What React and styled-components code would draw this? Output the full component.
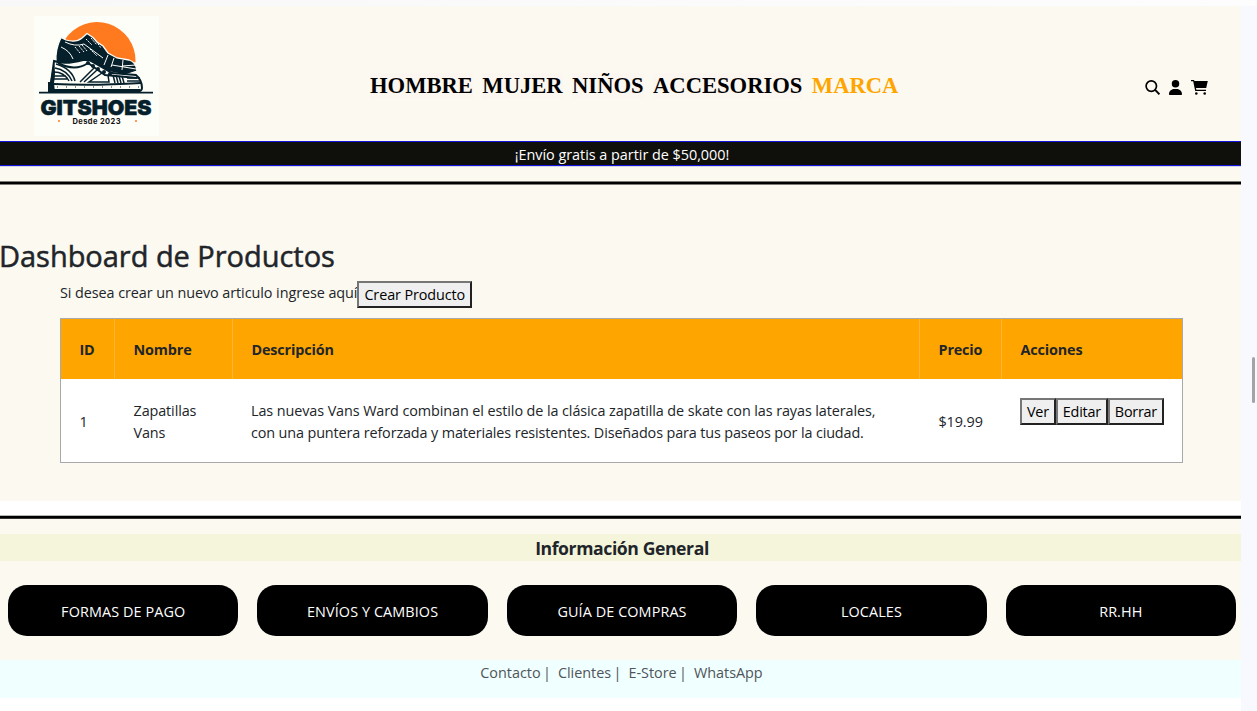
import React from "react";
import styled, { createGlobalStyle } from "styled-components";
import { FaUser } from "react-icons/fa6";

const cream = "#fcf9f1";

const GlobalStyle = createGlobalStyle`
  * { box-sizing: border-box; }
  body {
    margin: 0;
    background: #fff;
    color: #212529;
    font-family: "Open Sans", "Noto Sans", sans-serif;
    font-size: 14.4px;
    line-height: 22px;
    overflow: hidden;
  }
`;

const Window = styled.div`
  height: 711px;
  display: flex;
  flex-direction: column;
`;
const TopShade = styled.div`
  height: 6px;
  flex: none;
  background: linear-gradient(90deg, #f8f8f8, #fdfdfd);
`;
const Body = styled.div`
  flex: 1;
  display: flex;
  min-height: 0;
`;
const Page = styled.div`
  width: 1241px;
  flex: none;
  display: flex;
  flex-direction: column;
`;
const Gutter = styled.div`
  flex: 1;
  background: #f8f9fe;
  padding: 351px 2px 0 11px;
`;
const Thumb = styled.div`
  width: 3px;
  height: 46px;
  border-radius: 2px;
  background: #a3a3a5;
`;

const Header = styled.header`
  height: 135px;
  background: ${cream};
  display: flex;
  align-items: flex-start;
  padding: 10px 33px 0 34px;
`;
const Logo = styled.svg`
  width: 125px;
  height: 120px;
  flex: none;
`;
const Nav = styled.nav`
  display: flex;
  gap: 9.4px;
  margin: 57px 0 0 211px;
  font: bold 22.6px/26px "Liberation Serif", serif;
`;
const NavLink = styled.a`
  color: ${(p) => (p.$active ? "orange" : "#000")};
  background: ${(p) => (p.$active ? "none" : "#fcf6f1")};
`;
const Tools = styled.div`
  display: flex;
  gap: 8px;
  margin: 64px 0 0 auto;
  color: #000;
  svg { display: block; height: 15px; width: auto; }
`;

const Promo = styled.div`
  height: 25px;
  flex: none;
  background: #0f0f0c;
  border-top: 1px solid #1414dc;
  border-bottom: 1px solid #1414dc;
  color: #fff;
  text-align: center;
  line-height: 25px;
  padding-left: 3px;
  letter-spacing: -0.02px;
`;
const Rule = styled.div`
  height: 4px;
  flex: none;
  background: #000;
  border-top: 1px solid ${(p) => p.$top};
  border-bottom: 1px solid ${(p) => p.$bottom};
`;
const Band = styled.div`
  height: ${(p) => p.$h}px;
  flex: none;
  background: ${(p) => p.$bg || cream};
  border-top: ${(p) => (p.$edge ? `1px solid ${p.$edge}` : "none")};
`;
const Main = styled.main`
  height: 316px;
  background: ${cream};
  padding-top: 51px;
`;
const Title = styled.h2`
  margin: 0 0 0 -1px;
  font-size: 29px;
  line-height: 40px;
  font-weight: 500;
  letter-spacing: -0.03px;
  -webkit-text-stroke: 0.5px #212529;
`;
const Intro = styled.div`
  display: flex;
  margin: 5px 0 0 60px;
  height: 27px;
  letter-spacing: -0.07px;
  line-height: 23px;
`;
const Button = styled.button`
  height: 27px;
  padding: 0 5px;
  border: 2px solid;
  border-color: #767676 #222 #222 #767676;
  background: #efefef;
  color: #000;
  font: inherit;
  line-height: 23px;
  letter-spacing: ${(p) => (p.$wide ? "-0.1px" : "-0.24px")};
`;
const Table = styled.div`
  margin: 10px 0 0 60px;
  width: 1123px;
  border: 1px solid #a9a9ab;
  background: #fff;
`;
const Row = styled.div`
  display: grid;
  grid-template-columns: 54px 118px 687px 82px 1fr;
  height: ${(p) => (p.$head ? 60 : 83)}px;
  background: ${(p) => (p.$head ? "orange" : "#fff")};
  font-weight: ${(p) => (p.$head ? 700 : 400)};
  letter-spacing: ${(p) => (p.$head ? "-0.15px" : "-0.11px")};
`;
const Cell = styled.div`
  display: flex;
  align-items: ${(p) => (p.$top ? "flex-start" : "center")};
  padding: ${(p) => (p.$top ? "19px 0 0 18px" : "2px 0 0 18.5px")};
  border-right: 1px solid ${(p) => (p.$line ? "#ffb733" : "transparent")};
  white-space: pre;
`;
const Description = styled(Cell)`
  flex-direction: column;
  align-items: flex-start;
  justify-content: center;
  padding-left: 18px;
`;
const Line = styled.span`
  letter-spacing: ${(p) => p.$spacing}px;
`;

const FooterTitle = styled.h3`
  margin: 0;
  height: 27px;
  flex: none;
  background: #f5f5dc;
  font-size: 17.6px;
  font-weight: 700;
  line-height: 29px;
  text-align: center;
  padding-left: 3px;
  letter-spacing: -0.41px;
`;
const Pills = styled.div`
  height: 99px;
  flex: none;
  display: grid;
  grid-template-columns: repeat(5, 1fr);
  gap: 19px;
  padding: 24px 5px 24px 8px;
  background: ${cream};
`;
const Pill = styled.a`
  height: 51px;
  border-radius: 19px;
  background: #000;
  color: #fff;
  line-height: 53px;
  text-align: center;
  letter-spacing: 0.1px;
`;
const Contact = styled.div`
  height: 38px;
  flex: none;
  display: flex;
  justify-content: center;
  gap: 7px;
  padding: 2px 0 0 2px;
  background: #f0ffff;
  color: #4f5559;
  letter-spacing: -0.02px;
`;
const ContactItem = styled.span`
  display: flex;
  gap: 2.5px;
`;

const pills = ["FORMAS DE PAGO", "ENVÍOS Y CAMBIOS", "GUÍA DE COMPRAS", "LOCALES", "RR.HH"];
const contacts = ["Contacto", "Clientes", "E-Store", "WhatsApp"];
const heads = ["ID", "Nombre", "Descripción", "Precio", "Acciones"];

function SearchIcon() {
  return (
    <svg viewBox="0 0 15 15" fill="none" stroke="currentColor">
      <circle cx="6.300" cy="6.100" r="5.200" strokeWidth="1.700" />
      <path d="M9.900 9.700L14.400 14.300" strokeWidth="1.900" />
    </svg>
  );
}

function CartIcon() {
  return (
    <svg viewBox="0 0 17 15" fill="currentColor">
      <path d="M0 0H3L3.400 1H16.800L15.200 8H5L5.300 9.800H15V11.100H4.200L2.200 1.300H0Z" />
      <circle cx="5.300" cy="13.500" r="1.300" />
      <circle cx="13.700" cy="13.500" r="1.300" />
    </svg>
  );
}

function ShoeLogo() {
  const ink = "#06202b";
  const paper = "#fefef9";
  return (
    <Logo viewBox="34 16 125 120">
      <rect x="34" y="16" width="125" height="120" fill={paper} />
      <path d="M64.500 40A38.500 38.500 0 0 1 135.500 62L120 66L66 46Z" fill="#ff7a1f" />
      <path d="M61 37.500L66 40Q76 43 82 38L87 33.500L93 37.500L97 42L103 46L108 53L117 58L129 60Q136 62 137 71L125 75L56 62Q55 50 61 37.500Z" fill={ink} stroke={paper} strokeWidth="1.300" />
      <g fill="none" stroke={paper} strokeWidth="1">
        <path d="M61 47Q70 51 73 59M65 42Q75 47 84 44L103 58" />
        <path d="M86 39l6 6m-1-7l6 7m-1-4l5 7m-19-3l5 6m-8-5l5 6m-9-5l5 6m10-4l7 7" strokeDasharray="2 1" />
        <path d="M108 55l-4 10M114 58l-3 9M123 60l-1 10M112 65l24 4M122 66l14-1" />
      </g>
      <path d="M54 61Q65 65 83 60L89 60L98 65L112 73L136 75Q142 80 142 88Q142 91 137 92H50L49 83H51Z" fill={paper} stroke={ink} strokeWidth="2" />
      <path d="M54 61L50 83H48V92H55L54 83Q56 74 54 61Z" fill={ink} />
      <g fill="none" stroke={ink} strokeWidth="1.500">
        <path d="M56 64Q72 69 75 81M55 68Q67 70 72 81M54 72Q64 72 69 81M54 76H66M53 79H67" />
        <path d="M58 63Q75 72 88 63L105 75L137 78" strokeWidth="2" />
        <path d="M94 68L80 82M97 70L84 82M102 73L89 82L109 82L108 75" />
        <path d="M113 75L115 83M116 75L118 83M119 76L121 83M122 76L124 83M127 78H140M127 81H141" />
      </g>
      <g fill={ink}>
        <circle cx="88" cy="63" r="2" /><circle cx="93" cy="66" r="2" />
        <circle cx="98" cy="69" r="2" /><circle cx="104" cy="72" r="2" /><circle cx="110" cy="74" r="2" />
      </g>
      <path d="M54 84Q92 86 141 83M54 90H140" stroke={ink} strokeWidth="2" fill="none" />
      <path d="M57 87H140" stroke={ink} strokeWidth="1" strokeDasharray="1 8" />
      <path d="M39 92.700H153" stroke={ink} strokeWidth="1.700" />
      <text x="40.500" y="115" textLength="111" lengthAdjust="spacingAndGlyphs" fontFamily="Inter, sans-serif" fontWeight="900" fontSize="20.500" fill={ink} stroke={ink} strokeWidth=".5">GITSHOES</text>
      <text x="72.500" y="123.700" textLength="48" lengthAdjust="spacing" fontFamily="Inter, sans-serif" fontWeight="700" fontSize="7.500" fill="#111">Desde 2023</text>
      <circle cx="59" cy="121" r="1" fill="#ff7a1f" />
      <circle cx="136" cy="121" r="1" fill="#ff7a1f" />
    </Logo>
  );
}

export default function App() {
  return (
    <Window>
      <GlobalStyle />
      <TopShade />
      <Body>
        <Page>
          <Header>
            <ShoeLogo />
            <Nav>
              <NavLink>HOMBRE</NavLink>
              <NavLink>MUJER</NavLink>
              <NavLink>NIÑOS</NavLink>
              <NavLink>ACCESORIOS</NavLink>
              <NavLink $active>MARCA</NavLink>
            </Nav>
            <Tools>
              <SearchIcon />
              <FaUser />
              <CartIcon />
            </Tools>
          </Header>
          <Promo>¡Envío gratis a partir de $50,000!</Promo>
          <Band $h={15} $edge="#d6d5e8" />
          <Rule $top="#7d7b78" $bottom="#7d7b78" />
          <Main>
            <Title>Dashboard de Productos</Title>
            <Intro>
              <span>Si desea crear un nuevo articulo ingrese aquí</span>
              <Button $wide>Crear Producto</Button>
            </Intro>
            <Table>
              <Row $head>
                {heads.map((h, i) => <Cell key={h} $line={i < 4}>{h}</Cell>)}
              </Row>
              <Row>
                <Cell>1</Cell>
                <Cell>{"Zapatillas\nVans"}</Cell>
                <Description>
                  <Line $spacing={-0.09}>Las nuevas Vans Ward combinan el estilo de la clásica zapatilla de skate con las rayas laterales,</Line>
                  <Line $spacing={-0.13}>con una puntera reforzada y materiales resistentes. Diseñados para tus paseos por la ciudad.</Line>
                </Description>
                <Cell>$19.99</Cell>
                <Cell $top>
                  <Button>Ver</Button>
                  <Button>Editar</Button>
                  <Button>Borrar</Button>
                </Cell>
              </Row>
            </Table>
          </Main>
          <Band $h={14} $bg="#fff" />
          <Rule $top="#b5b5b5" $bottom="#333" />
          <Band $h={15} />
          <FooterTitle>Información General</FooterTitle>
          <Pills>{pills.map((p) => <Pill key={p}>{p}</Pill>)}</Pills>
          <Contact>
            {contacts.map((c, i) => (
              <ContactItem key={c}>
                <span>{c}</span>
                {i < 3 && <span>|</span>}
              </ContactItem>
            ))}
          </Contact>
        </Page>
        <Gutter><Thumb /></Gutter>
      </Body>
    </Window>
  );
}
